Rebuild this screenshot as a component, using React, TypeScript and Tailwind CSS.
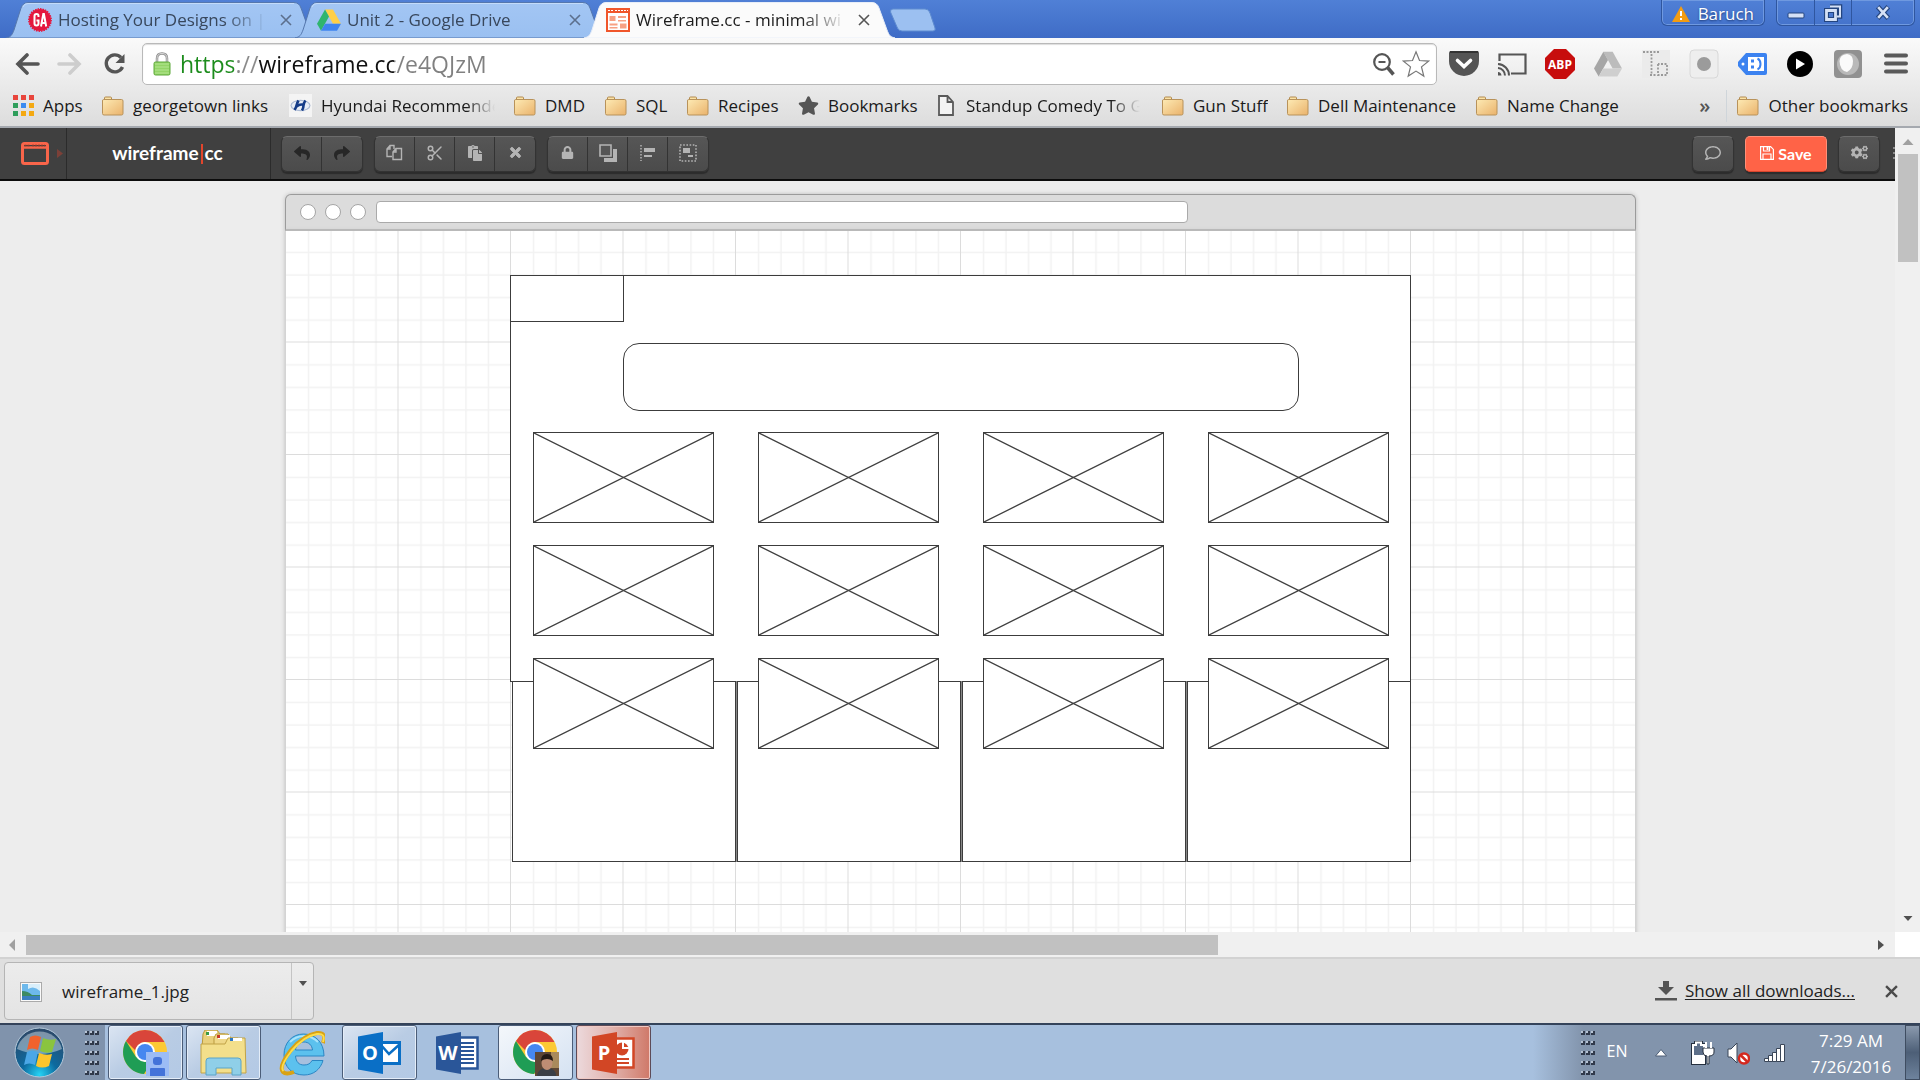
import React from "react";
import { FaReply, FaShare, FaLock, FaPaste, FaTimes, FaRegComment, FaCogs, FaStar } from "react-icons/fa";
import { Scissors } from "lucide-react";

type P = { children?: React.ReactNode };

/* ---------- small drawings ---------- */

const Folder = () => (
  <svg width="22" height="20" viewBox="0 0 22 20" className="shrink-0">
    <defs>
      <linearGradient id="fold" x1="0" y1="0" x2="1" y2="1">
        <stop offset="0" stopColor="#fdeab4" />
        <stop offset="1" stopColor="#eab26b" />
      </linearGradient>
    </defs>
    <path d="M2.500 3.500V2q0-1 1-1h5q1 0 1 1v1.500" fill="#fbe3a6" stroke="#b28a50" />
    <path d="M1.500 3.500h18q1.500 0 1.500 1.500v12.500q0 1.500-1.500 1.500h-17.500q-1.500 0-1.500-1.500v-12.500q0-1.500 1-1.500z" fill="url(#fold)" stroke="#b8925a" />
  </svg>
);

const AppsIcon = () => (
  <svg width="21" height="21" viewBox="0 0 21 21" className="shrink-0">
    {["#e8453c", "#e8453c", "#e8453c", "#2f9e5b", "#3b8bf0", "#f4a912", "#2f9e5b", "#f4a912", "#f4a912"].map((c, i) => (
      <rect key={i} x={(i % 3) * 8} y={Math.floor(i / 3) * 8} width="5" height="5" fill={c} />
    ))}
  </svg>
);

const Hyundai = () => (
  <svg width="23" height="23" viewBox="0 0 23 23" className="shrink-0">
    <rect width="23" height="23" fill="#f4f4f4" />
    <ellipse cx="11.500" cy="11.500" rx="10" ry="5.800" fill="#aab9d3" />
    <ellipse cx="11.500" cy="11.500" rx="8.800" ry="4.600" fill="#e9eef6" />
    <path d="M9.500 6.500Q8 9 7.500 11.500T5.500 16M16.500 6.500Q14.500 9 14.500 11.500T13 16.500M7.500 12.500Q11 9.500 15 11" fill="none" stroke="#153c88" strokeWidth="2.600" />
  </svg>
);

const PageIcon = () => (
  <svg width="16" height="21" viewBox="0 0 16 21" className="shrink-0">
    <path d="M1 1h8.500l5.500 6v13H1zM9.500 1v6H15" fill="#f4f4f4" stroke="#5a5a5a" strokeWidth="1.800" />
  </svg>
);

const GAIcon = () => (
  <svg width="24" height="24" viewBox="0 0 24 24" className="shrink-0">
    <circle cx="12" cy="12" r="11" fill="#e4173e" />
    <circle cx="12" cy="12" r="11.200" fill="none" stroke="#e4173e" strokeWidth="1.400" strokeDasharray="1.500 1" />
    <g fill="none" stroke="#fff" strokeWidth="2">
      <path d="M10.500 9V8q0-2-2-2t-2 2v7.500q0 2 2 2t2-2V12.500H8.500" />
      <path d="M13 18.500L15.300 6h.6L18.200 18.500M13.800 15h3.600" />
    </g>
  </svg>
);

const DriveIcon = ({ gray }: { gray?: boolean }) => (
  <svg width={gray ? 28 : 24} height={gray ? 28 : 24} viewBox="0 0 24 24" className="shrink-0">
    <path d="M8 1.500h8l8 14.300h-8z" fill={gray ? "#bcbcbc" : "#ffcf48"} />
    <path d="M8 1.500l4 7L4 22.800 0 15.800z" fill={gray ? "#a6a6a6" : "#2fb56f"} />
    <path d="M8 15.800h16l-4 7H4z" fill={gray ? "#cfcfcf" : "#3f84f0"} />
  </svg>
);

const WireIcon = () => (
  <svg width="24" height="24" viewBox="0 0 24 24" className="shrink-0">
    <rect x="1" y="1" width="22" height="22" fill="#fff" stroke="#f0562b" strokeWidth="2" />
    <path d="M0 0h24v5H0z" fill="#f0562b" />
    <path d="M2 2.500h5M9 2.500h13" stroke="#fff" strokeDasharray="2 1" />
    <path d="M3.500 8h6v5h-6zM3.500 15.500h8v2h-8zM12 8h8v2h-8zM12 12h8v1.500h-8zM14 15.500h6.500v5H14zM3.500 19h8v1.500h-8z" fill="#f7a184" />
  </svg>
);

const Cross = ({ s, c, w }: { s: number; c: string; w: number }) => (
  <svg width={s} height={s} viewBox="0 0 12 12">
    <path d="M1 1l10 10M11 1L1 11" stroke={c} strokeWidth={w} fill="none" />
  </svg>
);

/* ---------- browser tabs ---------- */

function TabShape({ active }: { active?: boolean }) {
  return (
    <svg className="absolute inset-0 -z-10 h-full w-full" viewBox="0 0 311 36" preserveAspectRatio="none">
      <defs>
        <linearGradient id="tabOff" x1="0" y1="0" x2="0" y2="1">
          <stop offset="0" stopColor="#a3c6f4" />
          <stop offset="1" stopColor="#9ac0f1" />
        </linearGradient>
      </defs>
      <path
        d="M0 36C5 35 6 33 8 28L15 6Q17 .5 22 .5H288Q293 .5 295 6L303 28C305 33 306 35 311 36z"
        fill={active ? "#fbfbfb" : "url(#tabOff)"}
        stroke={active ? "#e8eef8" : "#5577ad"}
      />
      {!active && <path d="M17 5Q18 1.500 22 1.500H288" fill="none" stroke="#c3dbf9" />}
    </svg>
  );
}

function Tab({ icon, title, active, z }: { icon: React.ReactNode; title: string; active?: boolean; z: string }) {
  return (
    <div className={"relative isolate -mr-[22px] flex h-9 w-[311px] items-center pl-[22px] " + z}>
      <TabShape active={active} />
      <button className="flex items-center gap-[6px]">
        {icon}
        <span
          className={
            "w-[210px] overflow-hidden text-left text-[17px] leading-7 whitespace-nowrap [mask-image:linear-gradient(90deg,#000_165px,transparent_210px)] " +
            (active ? "text-[#1c1c1c]" : "text-[#38475c]")
          }
        >
          {title}
        </span>
      </button>
      <button aria-label="Close tab" className="ml-2 flex size-5 items-center justify-center">
        <Cross s={12} c={active ? "#555" : "#5c6f8d"} w={1.6} />
      </button>
    </div>
  );
}

function TitleBar() {
  return (
    <header className="flex h-[38px] shrink-0 items-end justify-between bg-linear-to-b from-[#5080d6] to-[#3f6cc6] pl-[6px]">
      <nav className="flex items-end">
        <Tab icon={<GAIcon />} title="Hosting Your Designs on |" z="z-10" />
        <Tab icon={<DriveIcon />} title="Unit 2 - Google Drive" z="z-20" />
        <Tab icon={<WireIcon />} title="Wireframe.cc - minimal wi" active z="z-30" />
        <button aria-label="New tab" className="mb-[6px] ml-4">
          <svg width="47" height="24" viewBox="0 0 47 24">
            <path d="M4 1h32q4 0 5 4l5 15q1 3-2 3H13q-4 0-5-4L1.500 4Q1 1 4 1z" fill="#9cc0f1" stroke="#5f8cd0" />
          </svg>
        </button>
      </nav>
      <div className="flex h-full items-start gap-[11px] pr-[5px] text-white">
        <button className="flex h-[26px] items-center gap-2 rounded-b-md border border-t-0 border-[#2f569f] px-[10px] pt-[2px] text-[17px] leading-6 shadow-[inset_0_0_0_1px_#6f99e0]">
          <svg width="18" height="16" viewBox="0 0 18 16">
            <path d="M9 0l9 16H0z" fill="#f39c12" />
            <path d="M9 5v5M9 12v2" stroke="#fff" strokeWidth="2" />
          </svg>
          <span className="[text-shadow:0_1px_2px_#1d3a75]">Baruch</span>
        </button>
        <div className="flex h-[26px] divide-x divide-[#2f569f] rounded-b-md border border-t-0 border-[#2f569f] shadow-[inset_0_0_0_1px_#6f99e0]">
          <button aria-label="Minimize" className="flex w-[38px] items-center justify-center pt-[5px]">
            <svg width="18" height="7" viewBox="0 0 18 7"><rect x="1" y="1" width="16" height="5" rx="1" fill="#d5e1f6" stroke="#24457f" /></svg>
          </button>
          <button aria-label="Restore" className="flex w-[37px] items-center justify-center">
            <svg width="20" height="20" viewBox="0 0 20 20" fill="none">
              <path d="M7 3.500h10v10h-3" stroke="#24457f" strokeWidth="4.500" />
              <path d="M3.500 7.500h9v9h-9z" stroke="#24457f" strokeWidth="5" />
              <path d="M7 3.500h10v10h-3" stroke="#d5e1f6" strokeWidth="2" />
              <path d="M3.500 7.500h9v9h-9z" stroke="#d5e1f6" strokeWidth="2.800" />
            </svg>
          </button>
          <button aria-label="Close window" className="flex w-[62px] items-center justify-center">
            <svg width="16" height="15" viewBox="0 0 18 17">
              <path d="M3 2l12 13M15 2L3 15" stroke="#24457f" strokeWidth="5.500" />
              <path d="M3.500 2.500l11 12M14.500 2.500l-11 12" stroke="#d5e1f6" strokeWidth="3" />
            </svg>
          </button>
        </div>
      </div>
    </header>
  );
}

/* ---------- address bar ---------- */

const Slot = ({ children, label }: P & { label: string }) => (
  <button aria-label={label} className="flex w-12 items-center justify-center">{children}</button>
);

function AddressBar() {
  return (
    <div className="flex h-[47px] items-center pt-1 pl-[15px]">
      <button aria-label="Back">
        <svg width="25" height="22" viewBox="0 0 25 22"><path d="M12 2L3 11l9 9M4 11h19" fill="none" stroke="#555" strokeWidth="3.600" strokeLinecap="round" /></svg>
      </button>
      <button aria-label="Forward" className="ml-[17px]">
        <svg width="25" height="22" viewBox="0 0 25 22"><path d="M13 2l9 9-9 9M21 11H2" fill="none" stroke="#cdcdcd" strokeWidth="3.600" strokeLinecap="round" /></svg>
      </button>
      <button aria-label="Reload" className="ml-[21px]">
        <svg width="24" height="24" viewBox="0 0 24 24">
          <path d="M18 5.500A8.500 8.500 0 1 0 19.500 15" fill="none" stroke="#555" strokeWidth="3.400" />
          <path d="M21.500 2v9h-9z" fill="#555" />
        </svg>
      </button>
      <div className="ml-[15px] flex h-[42px] min-w-0 grow items-center rounded-[5px] border border-[#b9b9b9] bg-white pl-[10px] shadow-[inset_0_1px_1px_#ddd]">
        <svg width="18" height="24" viewBox="0 0 18 24" className="shrink-0">
          <path d="M4 11V6.500Q4 1.500 9 1.500t5 5V11" fill="none" stroke="#8f8f8f" strokeWidth="2.500" />
          <path d="M4 11V6.500Q4 1.500 9 1.500t5 5V11" fill="none" stroke="#d8d8d8" />
          <rect x="1" y="10" width="16" height="13" rx="1.500" fill="#93d467" stroke="#5da83a" />
          <path d="M2 12h14M2 15h14M2 18h14M2 21h14" stroke="#b4e593" />
        </svg>
        <input
          aria-label="Address"
          defaultValue="https://wireframe.cc/e4QJzM"
          className="ml-[9px] h-9 min-w-0 grow bg-[linear-gradient(90deg,#1c8c1c_54px,#8a8a8a_54px,#8a8a8a_78px,#111_78px,#111_214px,#808080_214px)] bg-clip-text text-[23px] text-transparent outline-none"
        />
        <button aria-label="Zoom" className="mr-1">
          <svg width="26" height="28" viewBox="0 0 26 28">
            <circle cx="10" cy="12" r="7.800" fill="none" stroke="#555" strokeWidth="2.200" />
            <path d="M6.500 12h7" stroke="#555" strokeWidth="2" />
            <path d="M15.500 17.500l6 7" stroke="#555" strokeWidth="3.500" />
          </svg>
        </button>
        <button aria-label="Bookmark this page" className="mr-[6px]">
          <svg width="28" height="28" viewBox="0 0 28 28">
            <path d="M14 1.800l3.500 8.700 9 .6-7 5.800 2.300 9.200-7.800-5-7.800 5 2.300-9.200-7-5.800 9-.6z" fill="#fff" stroke="#777" strokeWidth="1.200" />
          </svg>
        </button>
      </div>
      <div className="flex pl-[3px]">
        <Slot label="Pocket">
          <svg width="30" height="26" viewBox="0 0 30 26">
            <path d="M2 0h26q2 0 2 2v8a15 15 0 0 1-30 0V2q0-2 2-2z" fill="#555" />
            <path d="M1 1h28" stroke="#333" strokeWidth="2" />
            <path d="M8.500 9.500L15 15.500 21.500 9.500" fill="none" stroke="#fff" strokeWidth="3.600" strokeLinecap="round" />
          </svg>
        </Slot>
        <Slot label="Cast">
          <svg width="30" height="24" viewBox="0 0 30 24" fill="none" stroke="#555">
            <path d="M2.500 9V2.500h26v19H14" strokeWidth="2.200" />
            <path d="M1 12a11.500 11.500 0 0 1 11 11.500M1 16a7.500 7.500 0 0 1 7 7.500" strokeWidth="2" />
            <path d="M1 20a4 4 0 0 1 3.500 3.500H1z" fill="#555" stroke="none" />
          </svg>
        </Slot>
        <Slot label="Adblock Plus">
          <svg width="30" height="30" viewBox="0 0 30 30">
            <path d="M9 0h12l9 9v12l-9 9H9l-9-9V9z" fill="#c70d0d" />
            <text x="15" y="19.500" textAnchor="middle" fontFamily="Open Sans" fontWeight="700" fontSize="12" fill="#fff">ABP</text>
          </svg>
        </Slot>
        <Slot label="Drive"><DriveIcon gray /></Slot>
        <Slot label="Text tool">
          <svg width="28" height="28" viewBox="0 0 28 28">
            <rect width="28" height="28" fill="#ebebeb" />
            <path d="M1 2h17M9.500 4v20M8 25h7M16 14v11h9V14h-9" fill="none" stroke="#999" strokeWidth="1.800" strokeDasharray="2 1.500" />
          </svg>
        </Slot>
        <Slot label="Recorder">
          <svg width="30" height="30" viewBox="0 0 30 30">
            <rect x="1" y="1" width="28" height="28" rx="4" fill="#eeeeee" stroke="#d8d8d8" />
            <circle cx="15" cy="15" r="7" fill="#9b9b9b" />
          </svg>
        </Slot>
        <Slot label="Tag">
          <svg width="29" height="22" viewBox="0 0 29 22">
            <path d="M8 0h19q2 0 2 2v18q0 2-2 2H8L0 13V9z" fill="#3b82f0" />
            <circle cx="5" cy="11" r="1.500" fill="#fff" />
            <path d="M10 4h16v14H10z" fill="#fff" />
            <path d="M13 6.500h3v3h-3zM13 12.500h3v3h-3z" fill="#3b82f0" />
            <path d="M19.500 5.500q3 1.500 3 5.500t-3 5.500" fill="none" stroke="#3b82f0" strokeWidth="2" />
          </svg>
        </Slot>
        <Slot label="Play">
          <svg width="26" height="26" viewBox="0 0 26 26"><circle cx="13" cy="13" r="13" /><path d="M9 7.500v11l9-5.500z" fill="#fff" /></svg>
        </Slot>
        <Slot label="Pearl">
          <svg width="28" height="28" viewBox="0 0 28 28">
            <rect width="28" height="28" rx="4" fill="#919191" />
            <circle cx="14" cy="14" r="11" fill="#b9b9b9" />
            <path d="M5.500 11Q6 4.500 13 4q6 1 6 7 0 8-6 11-7-1-7.500-11z" fill="#fafafa" />
          </svg>
        </Slot>
        <Slot label="Menu">
          <svg width="24" height="21" viewBox="0 0 24 21"><path d="M2 2.500h20M2 10.500h20M2 18.500h20" stroke="#5a5a5a" strokeWidth="4" strokeLinecap="round" /></svg>
        </Slot>
      </div>
    </div>
  );
}

/* ---------- bookmarks ---------- */

const fade = " [mask-image:linear-gradient(90deg,#000_145px,transparent_174px)]";
const marks: [string, React.ReactNode, string][] = [
  ["Apps", <AppsIcon />, "w-10"],
  ["georgetown links", <Folder />, "w-[137px]"],
  ["Hyundai Recommende", <Hyundai />, "w-[174px]" + fade],
  ["DMD", <Folder />, "w-[41px]"],
  ["SQL", <Folder />, "w-8"],
  ["Recipes", <Folder />, "w-[61px]"],
  ["Bookmarks", <FaStar size={21} color="#555" className="shrink-0" />, "w-[91px]"],
  ["Standup Comedy To G", <PageIcon />, "ml-[3px] w-[177px]" + fade],
  ["Gun Stuff", <Folder />, "w-[75px]"],
  ["Dell Maintenance", <Folder />, "w-[139px]"],
  ["Name Change", <Folder />, "w-[114px]"],
];

function Bookmarks() {
  return (
    <nav className="flex h-[43px] items-center gap-[19px] border-b-2 border-[#a5a9af] pl-[13px] text-[17px] leading-6 text-[#1a1a1a]">
      {marks.map(([t, icon, w]) => (
        <a key={t} href="#" className="flex shrink-0 items-center gap-[9px]">
          {icon}
          <span className={"overflow-hidden whitespace-nowrap " + w}>{t}</span>
        </a>
      ))}
      <div className="ml-auto flex items-center pr-3">
        <button className="text-[20px] font-semibold text-[#555]">»</button>
        <span className="ml-4 h-8 w-px bg-[#cfd5da]" />
        <a href="#" className="ml-[10px] flex items-center gap-[9px] whitespace-nowrap"><Folder />Other bookmarks</a>
      </div>
    </nav>
  );
}

/* ---------- wireframe app ---------- */

const Group = ({ children }: P) => (
  <div className="flex h-9 divide-x divide-[#333] rounded-md border border-[#333] border-t-[#6c6c6c] bg-linear-to-b from-[#565656] to-[#4b4b4b] text-[#b4b4b4] shadow-[0_2px_1px_#2c2c2c]">
    {children}
  </div>
);
const Tool = ({ children, label }: P & { label: string }) => (
  <button aria-label={label} className="flex w-10 items-center justify-center border-[#333] pb-[2px]">{children}</button>
);

function AppBar() {
  return (
    <div className="flex h-[53px] shrink-0 items-center border-b-2 border-[#0c0c0c] bg-[#404040]">
      <button aria-label="Stencils" className="flex h-full w-[67px] items-center gap-2 border-r border-[#2b2b2b] pl-[21px]">
        <svg width="28" height="23" viewBox="0 0 28 23">
          <rect x="1.500" y="1.500" width="25" height="20" rx="2" fill="none" stroke="#f9654a" strokeWidth="3" />
          <path d="M2 5.500h24" stroke="#f9654a" strokeWidth="2.500" />
          <path d="M3.500 3.500h6M11 3.500h13" stroke="#7c3a2d" strokeWidth="1.500" strokeDasharray="2 1" />
        </svg>
        <svg width="6" height="9" viewBox="0 0 6 9"><path d="M0 0l6 4.500L0 9z" fill="#7c4038" /></svg>
      </button>
      <a href="#" className="flex h-full w-[204px] items-center justify-center border-r border-[#2b2b2b] pr-[2px] font-[Lato] text-[19px] font-bold text-white">
        wireframe<span className="mx-[2px] h-5 w-[2px] bg-[#e2452c]" />cc
      </a>
      <div className="flex grow gap-[11px] pl-[10px]">
        <Group>
          <Tool label="Undo"><FaReply size={16} color="#272727" /></Tool>
          <Tool label="Redo"><FaShare size={16} color="#272727" /></Tool>
        </Group>
        <Group>
          <Tool label="Copy">
            <svg width="17" height="17" viewBox="0 0 17 17" fill="none" stroke="currentColor" strokeWidth="1.400">
              <path d="M6 12.500H1V5l3-3.500h4V5M4 1.500V5H1" /><path d="M7 8l3-3.500h5.500v11H7zM10 4.500V8H7" />
            </svg>
          </Tool>
          <Tool label="Cut"><Scissors size={18} strokeWidth={2} /></Tool>
          <Tool label="Paste"><FaPaste size={16} /></Tool>
          <Tool label="Delete"><FaTimes size={15} stroke="#b4b4b4" strokeWidth={30} /></Tool>
        </Group>
        <Group>
          <Tool label="Lock"><FaLock size={13} /></Tool>
          <Tool label="Arrange">
            <svg width="18" height="18" viewBox="0 0 18 18"><path d="M5 14h9V5h4v13H5z" fill="#b4b4b4" /><path d="M1 1h11v11H1z" fill="#555" stroke="#b4b4b4" strokeWidth="1.600" /></svg>
          </Tool>
          <Tool label="Align">
            <svg width="16" height="18" viewBox="0 0 16 18" fill="#b4b4b4"><path d="M1 1v16" stroke="#b4b4b4" strokeWidth="1.500" strokeDasharray="1.500 1.500" /><path d="M4 4h11v4H4zM4 11h8v2H4z" /></svg>
          </Tool>
          <Tool label="Group">
            <svg width="18" height="18" viewBox="0 0 18 18" fill="#b4b4b4"><path d="M1 1h16v16H1z" fill="none" stroke="#b4b4b4" strokeWidth="1.600" strokeDasharray="1.600 1.600" /><path d="M4 4h7v5H4zM9 11h5v2H9z" /></svg>
          </Tool>
        </Group>
      </div>
      <div className="flex items-center gap-[11px] pr-[13px]">
        <Group><Tool label="Comments"><FaRegComment size={16} /></Tool></Group>
        <button className="flex h-9 w-[82px] items-center justify-center gap-1 rounded-[5px] border border-[#ff9079] border-b-[#d8452d] bg-[#ff6347] font-[Lato] text-[16px] font-bold text-white shadow-[0_2px_1px_#2c2c2c]">
          <svg width="14" height="14" viewBox="0 0 14 14" fill="none" stroke="#fff" strokeWidth="1.200" className="mb-[2px]">
            <path d="M.6.6h10l2.800 2.800v10H.6zM3.500.6V5h6V.6M3 13V8h8v5" /><path d="M7.500 1v3" strokeWidth="1.800" />
          </svg>
          Save
        </button>
        <Group><Tool label="Settings"><FaCogs size={17} /></Tool></Group>
      </div>
      <span className="h-[14px] w-[2px] self-center bg-[repeating-linear-gradient(#8a8a8a_0_2px,transparent_2px_5px)]" />
    </div>
  );
}

const Picture = () => (
  <svg className="h-[91px] w-[181px] border border-[#3c3c3c] bg-white" viewBox="0 0 179 89" preserveAspectRatio="none">
    <path d="M0 0l179 89M179 0L0 89" stroke="#404040" strokeWidth="1.300" />
  </svg>
);

function Canvas() {
  return (
    <div className="ml-[285px] w-[1351px] pt-[13px]">
      <div className="flex h-[37px] items-center rounded-t-md border border-b-2 border-[#9b9b9b] border-b-[#b9b9b9] bg-[#dcdcdc] pl-[14px] shadow-[0_0_4px_#bbb]">
        <div className="flex gap-[9px]">
          {[0, 1, 2].map((i) => <span key={i} className="size-4 rounded-full border border-[#a5a5a5] bg-white" />)}
        </div>
        <span className="ml-[10px] h-[22px] w-[812px] rounded-[4px] border border-[#aaa] bg-white" />
      </div>
      <div className="relative h-[900px] border-x border-[#d4d4d4] bg-white shadow-[0_0_4px_#bbb]">
        <svg className="absolute inset-0 h-full w-full">
          <defs>
            <pattern id="grid" width="112.500" height="112.500" patternUnits="userSpaceOnUse" patternTransform="translate(0 -1)">
              <path d="M22.500 0v112.500M45 0v112.500M67.500 0v112.500M90 0v112.500M0 22.500h112.500M0 45h112.500M0 67.500h112.500M0 90h112.500" stroke="#f2f2f2" strokeWidth="1.500" />
              <path d="M112.500 0v112.500H0" fill="none" stroke="#dcdcdc" strokeWidth="2" />
            </pattern>
          </defs>
          <rect width="100%" height="100%" fill="url(#grid)" />
        </svg>
        <div className="absolute top-[44px] left-[224px] h-[407px] w-[901px] border border-[#3c3c3c] bg-white" />
        <div className="absolute top-[44px] left-[224px] h-[47px] w-[114px] border border-[#3c3c3c] bg-white" />
        <div className="absolute top-[112px] left-[337px] h-[68px] w-[676px] rounded-2xl border border-[#3c3c3c] bg-white" />
        <div className="absolute top-[450px] left-[226px] grid h-[181px] w-[899px] grid-cols-4 gap-px bg-[#888]">
          {[0, 1, 2, 3].map((i) => <div key={i} className="border border-[#3c3c3c] bg-white" />)}
        </div>
        <div className="absolute top-[201px] left-[247px] grid grid-cols-4 gap-x-[44px] gap-y-[22px]">
          {Array.from({ length: 12 }, (_, i) => <Picture key={i} />)}
        </div>
      </div>
    </div>
  );
}

const Tri = ({ d, c }: { d: string; c: string }) => (
  <svg width="12" height="12" viewBox="0 0 12 12"><path d={d} fill={c} /></svg>
);

function Workspace() {
  return (
    <>
      <div className="flex min-h-0 grow">
        <main className="flex min-w-0 grow flex-col bg-[#ededed]">
          <AppBar />
          <div className="min-h-0 grow overflow-hidden"><Canvas /></div>
        </main>
        <div className="flex w-[25px] flex-col items-center bg-[#f0f0f0] py-2">
          <Tri d="M6 3l5.500 6H.5z" c="#a0a0a0" />
          <div className="mt-[6px] h-[108px] w-5 bg-[#c1c1c1]" />
          <span className="grow" />
          <Tri d="M6 9l4.500-5h-9z" c="#505050" />
        </div>
      </div>
      <div className="flex h-[25px] shrink-0 bg-white">
        <div className="flex grow items-center bg-[#f0f0f0] pr-2 pl-[6px]">
          <Tri d="M3 6l6-6v12z" c="#a0a0a0" />
          <div className="ml-2 h-5 w-[1192px] bg-[#c1c1c1]" />
          <span className="grow" />
          <Tri d="M9 6L3 1v10z" c="#505050" />
        </div>
        <div className="w-[25px]" />
      </div>
    </>
  );
}

/* ---------- downloads ---------- */

function Downloads() {
  return (
    <div className="flex h-[66px] shrink-0 items-center border-t-2 border-[#d2d2d2] bg-[#dfdfdf] pl-1 text-[17px] leading-6 text-[#222]">
      <div className="flex h-[58px] w-[310px] rounded-[4px] border border-[#b5b5b5] bg-linear-to-b from-[#ececec] to-[#e4e4e4]">
        <button className="flex grow items-center gap-5 pt-[2px] pl-[15px]">
          <svg width="22" height="20" viewBox="0 0 22 20">
            <rect x=".5" y=".5" width="21" height="19" fill="#fafafa" stroke="#aaa" />
            <path d="M2 2h18v16H2z" fill="#6db9ec" /><path d="M8 2h12v7Q14 3 8 7z" fill="#d9effb" />
            <path d="M2 9q6 0 10 4h8v2H2z" fill="#3c8a62" /><path d="M2 14h18v4H2z" fill="#3a7fc0" />
          </svg>
          wireframe_1.jpg
        </button>
        <button aria-label="Download options" className="flex w-[22px] justify-center border-l border-[#c4c4c4] pt-[14px]">
          <Tri d="M2 4h8L6 9z" c="#505050" />
        </button>
      </div>
      <div className="ml-auto flex items-center pr-[22px]">
        <svg width="22" height="20" viewBox="0 0 22 20" fill="#555"><path d="M8 0h6v6h5l-8 8-8-8h5zM0 17h22v2.500H0z" /></svg>
        <a href="#" className="ml-2 whitespace-nowrap underline underline-offset-2">Show all downloads...</a>
        <button aria-label="Close downloads" className="ml-[30px]"><Cross s={13} c="#4a4a4a" w={2.200} /></button>
      </div>
    </div>
  );
}

/* ---------- taskbar ---------- */

const Chrome = ({ children }: P) => (
  <svg width="46" height="46" viewBox="0 0 46 46">
    <circle cx="22" cy="22" r="22" fill="#fcc934" />
    <path d="M22 0A22 22 0 0 1 41.500 12H20L12 20 3 11A22 22 0 0 1 22 0z" fill="#d9453a" />
    <path d="M3 11A22 22 0 0 0 21 44L31 28 22 32 13 27z" fill="#1f9d55" />
    <circle cx="22" cy="22" r="10" fill="#fff" /><circle cx="22" cy="22" r="8" fill="#4687f0" />
    {children}
  </svg>
);

const OfficeIcon = ({ c, l, children }: P & { c: string; l: string }) => (
  <svg width="43" height="42" viewBox="0 0 43 42">
    {children}
    <path d="M0 4.500L25 0v42L0 37.500z" fill={c} />
    <text x="12" y="28" textAnchor="middle" fontFamily="Open Sans" fontWeight="700" fontSize="20" fill="#fff">{l}</text>
  </svg>
);

const box = "flex h-[55px] w-[75px] items-center justify-center rounded-[3px] ";
const open = "border border-[#4b5d78] bg-linear-to-br from-[#dbe5f2] via-[#b9cce4] to-[#b3c9e5] shadow-[inset_0_0_0_1px_#e4edf8]";

const Dots = () => (
  <svg width="15" height="44" viewBox="0 0 15 44">
    {[0, 1, 2, 3, 4].map((r) => [0, 1, 2].map((c) => (
      <g key={r + "-" + c}><rect x={c * 5} y={r * 10} width="4" height="4" fill="#30394a" /><rect x={c * 5} y={r * 10} width="2" height="2" fill="#b8c4d4" /></g>
    )))}
  </svg>
);

function Taskbar() {
  return (
    <footer className="flex h-[57px] shrink-0 items-center justify-between border-t-2 border-[#34435a] bg-[#a7c0de] text-white">
      <div className="flex h-full items-center gap-[3px]">
        <div className="flex h-full w-[105px] items-center gap-5 bg-[#8093ac] pl-[14px]">
          <button aria-label="Start">
            <svg width="51" height="51" viewBox="0 0 51 51">
              <defs>
                <radialGradient id="orb" cx=".5" cy=".95" r=".9">
                  <stop offset="0" stopColor="#25d3f5" /><stop offset=".4" stopColor="#0d6a9f" /><stop offset="1" stopColor="#2b4a6b" />
                </radialGradient>
              </defs>
              <circle cx="25.500" cy="25.500" r="24.500" fill="url(#orb)" stroke="#b5c9da" />
              <path d="M3 22A23 22 0 0 1 48 22Q26 32 3 22z" fill="#fff" opacity=".4" />
              <path d="M16 10q5-3 11 0l-3 13q-6-3-11 0z" fill="#f0622d" />
              <path d="M29 11q6 3 13 1l-4 13q-6 2-12-1z" fill="#8ac43f" />
              <path d="M13 25q5-3 11 0l-3 13q-6-3-11 0z" fill="#4ba7e6" />
              <path d="M25 26q7 3 13 1l-3 12q-7 3-13 0z" fill="#fcc52c" />
            </svg>
          </button>
          <Dots />
        </div>
        <button aria-label="Chrome" className={box + open}>
          <Chrome><rect x="23" y="22" width="23" height="24" fill="#9cbcf5" /><rect x="30" y="27" width="9" height="8" rx="3" fill="#4473d9" /><path d="M27 46v-7q0-1 1-1h13q1 0 1 1v7z" fill="#4473d9" /></Chrome>
        </button>
        <button aria-label="Explorer" className={box + open}>
          <svg width="47" height="46" viewBox="0 0 47 46">
            <path d="M3 4l2-4h12l3 4h5v14H2z" fill="#e9d07c" stroke="#b99a3e" /><path d="M7 1h10v5H7z" fill="#fff" /><path d="M6 2h3v3H6z" fill="#3b9b46" />
            <path d="M14 8l2-4h12l3 4h7v10H14z" fill="#efd888" stroke="#b99a3e" /><path d="M18 5h12v4H18z" fill="#fff" /><path d="M17 5h3v3h-3z" fill="#c63c2a" />
            <path d="M1 14h24l3-6h17l1 35H1z" fill="#f3df8b" stroke="#c1a347" /><path d="M30 8h12v3H30z" fill="#fff" /><path d="M30 8h3v3h-3z" fill="#2d77c4" />
            <path d="M6 45V31q0-3 3-3h29q3 0 3 3v14h-9v-7H16v7z" fill="#8fcfe8" stroke="#5ba4c8" />
          </svg>
        </button>
        <button aria-label="Internet Explorer" className={box}>
          <svg width="46" height="46" viewBox="0 0 46 46">
            <path
              d="M24.500 4C36 4 45 12 45 26H16.500C17 32 20 35 25 35c4 0 6.500-1.500 8-4.500h11C41.500 39 35 45 25 45 13 45 5 37 5 25S13 4 24.500 4zM16.500 20h17c-.5-5-4-8-8.500-8s-8 3-8.500 8z"
              fill="#5cc1ee" stroke="#2b86c4"
            />
            <path d="M11 12Q17 6 25 6t14 6" fill="none" stroke="#a8e3fb" strokeWidth="2" />
            <path d="M44 13Q48 2 38 3 25 5 12 20-1 37 4 42q3 3 11 0" fill="none" stroke="#d9a214" strokeWidth="4" />
            <path d="M44 12Q47 3 38 4 25 6 12.500 21 0 37 4.500 41" fill="none" stroke="#fbdc4c" strokeWidth="2" />
          </svg>
        </button>
        <button aria-label="Outlook" className={box + open}>
          <OfficeIcon c="#0a6fc6" l="O"><path d="M22 10.500h19.500v21H22z" fill="#fff" stroke="#0a6fc6" strokeWidth="3" /><path d="M23 13l8 9 11-10" fill="none" stroke="#0a6fc6" strokeWidth="2.500" /></OfficeIcon>
        </button>
        <button aria-label="Word" className={box}>
          <OfficeIcon c="#2a5699" l="W"><path d="M22 5.500h19.500v31H22z" fill="#fff" stroke="#2a5699" strokeWidth="2.500" /><path d="M25 11h13M25 15h13M25 19h13M25 23h13M25 27h13M25 31h13" stroke="#2a5699" strokeWidth="2" /></OfficeIcon>
        </button>
        <button aria-label="Chrome profile" className="flex h-[55px] w-[75px] items-center justify-center rounded-[3px] border border-[#4b5d78] bg-linear-to-br from-[#f4f7fb] to-[#d5e2f2]">
          <Chrome>
            <rect x="22" y="22" width="24" height="24" fill="#5d4635" /><rect x="38" y="22" width="8" height="16" fill="#a98a5c" />
            <path d="M24 46q1-8 10-8t9 8z" fill="#3a3f46" /><ellipse cx="34" cy="33" rx="5.500" ry="7" fill="#bf8d74" /><path d="M28 31q0-7 6-7t6 7q-6-4-12 0z" fill="#241a15" />
          </Chrome>
        </button>
        <button aria-label="PowerPoint" className="flex h-[55px] w-[75px] items-center justify-center rounded-[3px] border border-[#5d4b58] bg-linear-to-r from-[#ecd9dc] via-[#e0b1ab] to-[#cf7868] shadow-[inset_0_0_0_1px_#f0c9c3]">
          <OfficeIcon c="#d24625" l="P">
            <path d="M22 6.500h19.500v29H22z" fill="#fff" stroke="#d24625" strokeWidth="2.500" /><circle cx="30" cy="17" r="6.500" fill="#d24625" /><path d="M31 9v7h7" fill="none" stroke="#fff" strokeWidth="2" /><path d="M25 27h12M25 31h12" stroke="#d24625" strokeWidth="2" />
          </OfficeIcon>
        </button>
      </div>
      <div className="flex h-full items-center bg-linear-to-r from-[#a7c0de] to-[#8294ac] to-[50px] pl-12">
        <Dots />
        <button className="ml-[9px] w-6 pb-1 text-[16px]">EN</button>
        <svg width="12" height="8" viewBox="0 0 12 8" className="ml-[26px]"><path d="M6 .5L11.500 7H.5z" fill="#fff" stroke="#4c5d75" /></svg>
        <svg width="24" height="24" viewBox="0 0 24 24" className="ml-6">
          <path d="M2 4h3V1.500h5V4h3v18H2z" fill="#8294ac" stroke="#26303f" strokeWidth="4" /><path d="M2 4h3V1.500h5V4h3v18H2z" fill="#5d6f89" stroke="#fff" strokeWidth="2" />
          <path d="M3 14h9v7H3z" fill="#fff" /><path d="M15 2v5M20 2v5M12 7h11v4q0 4-5 4v8h-2v-8q-4 0-4-4z" fill="#fff" stroke="#26303f" /><path d="M15 1v6M20 1v6" stroke="#fff" strokeWidth="2" />
        </svg>
        <svg width="23" height="24" viewBox="0 0 23 24" className="ml-3">
          <path d="M1 8h3l6-6v20l-6-6H1z" fill="#fff" stroke="#3a4658" /><circle cx="17" cy="17.500" r="5" fill="#fff" stroke="#d4281e" strokeWidth="2.500" /><path d="M13.500 14l7 7" stroke="#d4281e" strokeWidth="2.500" />
        </svg>
        <svg width="21" height="18" viewBox="0 0 21 18" className="ml-[14px]" fill="#fff" stroke="#3a4658">
          <path d="M.5 14.500h4v3h-4zM4.500 11.500h4v6h-4zM8.500 8.500h4v9h-4zM12.500 4.500h4v13h-4zM16.500.5h4v17h-4z" />
        </svg>
        <button className="ml-[22px] w-[88px] pt-[2px] text-center text-[17px] leading-[26px] whitespace-nowrap">
          7:29 AM<br />7/26/2016
        </button>
        <button aria-label="Show desktop" className="ml-[10px] h-full w-[15px] border border-[#3f4d61] bg-linear-to-b from-[#8b9aae] via-[#4d5f77] to-[#6e839d]" />
      </div>
    </footer>
  );
}

export default function App() {
  return (
    <div className="flex h-screen flex-col overflow-hidden bg-[#ededed] font-['Open_Sans',sans-serif]">
      <TitleBar />
      <div className="shrink-0 bg-linear-to-b from-[#fafafa] to-[#dcdcdc]">
        <AddressBar />
        <Bookmarks />
      </div>
      <Workspace />
      <Downloads />
      <Taskbar />
    </div>
  );
}
